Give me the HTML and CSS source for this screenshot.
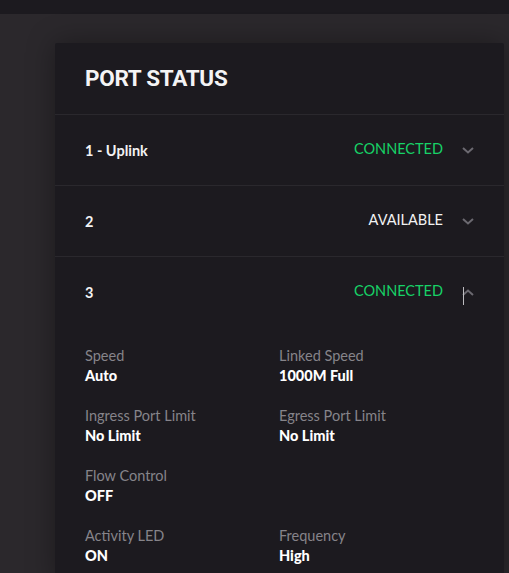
FILE: index.html
```html
<!DOCTYPE html>
<html>
<head>
<meta charset="utf-8">
<link rel="stylesheet" href="styles.css">
</head>
<body>
<div class="topbar"></div>
<main class="main">
  <section class="card">
    <header class="card-head"><h1>PORT STATUS</h1></header>
    <div class="row">
      <span class="port">1 - Uplink</span>
      <span class="status ok">CONNECTED</span>
      <svg class="chev" width="12" height="7" viewBox="0 0 12 7"><path d="M1 1l5 4.5L11 1" fill="none" stroke="#6b6970" stroke-width="2"/></svg>
    </div>
    <div class="row">
      <span class="port">2</span>
      <span class="status">AVAILABLE</span>
      <svg class="chev" width="12" height="7" viewBox="0 0 12 7"><path d="M1 1l5 4.5L11 1" fill="none" stroke="#6b6970" stroke-width="2"/></svg>
    </div>
    <div class="row open">
      <span class="port">3</span>
      <span class="status ok">CONNECTED</span>
      <svg class="chev" width="12" height="7" viewBox="0 0 12 7"><path d="M1 6l5-4.5L11 6" fill="none" stroke="#6b6970" stroke-width="2"/></svg>
      <span class="cursor"></span>
    </div>
    <div class="details">
      <div class="item"><div class="lbl">Speed</div><div class="val">Auto</div></div>
      <div class="item"><div class="lbl">Linked Speed</div><div class="val">1000M Full</div></div>
      <div class="item"><div class="lbl">Ingress Port Limit</div><div class="val">No Limit</div></div>
      <div class="item"><div class="lbl">Egress Port Limit</div><div class="val">No Limit</div></div>
      <div class="item"><div class="lbl">Flow Control</div><div class="val">OFF</div></div>
      <div class="item"></div>
      <div class="item"><div class="lbl">Activity LED</div><div class="val">ON</div></div>
      <div class="item"><div class="lbl">Frequency</div><div class="val">High</div></div>
    </div>
  </section>
</main>
</body>
</html>
```
FILE: styles.css
```css
* { box-sizing: border-box; }
html, body { margin: 0; padding: 0; height: 100%; overflow: hidden; }
body {
  background: #2b282c;
  font-family: Lato, "Liberation Sans", sans-serif;
  color: #fff;
}
.topbar {
  height: 14px;
  background: #1c1a1f;
}
.main {
  padding: 29px 5px 0 55px;
}
.card {
  width: 449px;
  background: #1c1a1f;
  border-radius: 2px 2px 0 0;
  box-shadow: 0 0 28px rgba(0, 0, 0, 0.35);
  height: 540px;
}
.card-head {
  height: 72px;
  border-bottom: 1px solid #2a282d;
  display: flex;
  align-items: center;
  padding-left: 30px;
}
.card-head h1 {
  margin: 0;
  font-family: Roboto, "Liberation Sans", sans-serif;
  font-weight: 700;
  font-size: 22.5px;
  letter-spacing: -0.3px;
  color: #f4f4f5;
  padding-bottom: 2px;
}
.row {
  position: relative;
  height: 71px;
  border-bottom: 1px solid #2a282d;
  display: flex;
  align-items: center;
  padding: 0 30px;
}
.row.open { border-bottom: none; height: 70px; }
.port {
  font-weight: 700;
  font-size: 14.5px;
  color: #f2f2f3;
  flex: 1;
  padding-top: 1px;
}
.status {
  font-size: 14.5px;
  color: #f2f2f3;
  margin-right: 19px;
  padding-bottom: 3px;
}
.status.ok { color: #17d267; }
.chev { display: block; margin-right: 0; }
.cursor {
  position: absolute;
  left: 408px;
  top: 30px;
  width: 1px;
  height: 18px;
  background: #bdbcc0;
}
.details {
  display: grid;
  grid-template-columns: 194px 1fr;
  padding: 19px 30px 0;
  row-gap: 20px;
}
.item { min-height: 40px; }
.lbl {
  font-size: 14.5px;
  line-height: 20px;
  color: #86848a;
}
.val {
  font-size: 14.5px;
  line-height: 20px;
  font-weight: 900;
  color: #fff;
}
```
